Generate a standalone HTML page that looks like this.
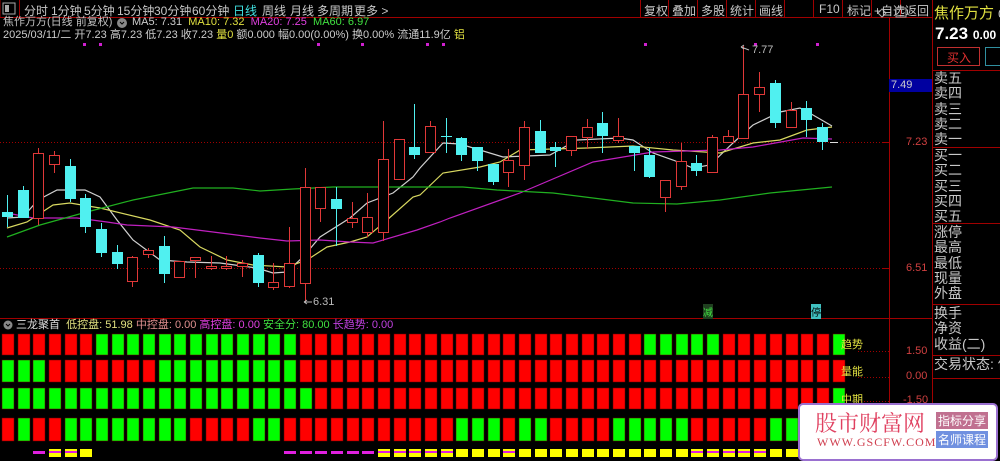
<!DOCTYPE html>
<html><head><meta charset="utf-8">
<style>
*{margin:0;padding:0;box-sizing:border-box}
body{width:1000px;height:459px;background:#000;overflow:hidden;position:relative;font-family:"Liberation Sans","Noto Sans CJK SC",sans-serif;color:#c0c0c0}
.a{position:absolute;white-space:nowrap}
.tb{font-size:12px;top:2px;color:#c8c8c8}
.rp{font-size:14px;color:#c8c8c8;left:934px;line-height:15.3px}
</style></head><body>
<svg class="a" style="left:0;top:0" width="1000" height="459" id="sv">
<line x1="0" y1="17.5" x2="932" y2="17.5" stroke="#a00000"/>
<line x1="0" y1="0" x2="0" y2="17" stroke="#a00000"/>
<rect x="3" y="3" width="12" height="11" fill="none" stroke="#aaa"/><rect x="5" y="5" width="4" height="7" fill="#aaa"/>
<line x1="19.5" y1="0" x2="19.5" y2="17" stroke="#a00000"/>
<line x1="640.5" y1="0" x2="640.5" y2="17" stroke="#a00000"/>
<g stroke="#a00000"><line x1="668.5" y1="0" x2="668.5" y2="17"/><line x1="697.5" y1="0" x2="697.5" y2="17"/><line x1="726.5" y1="0" x2="726.5" y2="17"/><line x1="755.5" y1="0" x2="755.5" y2="17"/><line x1="784.5" y1="0" x2="784.5" y2="17"/><line x1="813.5" y1="0" x2="813.5" y2="17"/><line x1="842.5" y1="0" x2="842.5" y2="17"/><line x1="871.5" y1="0" x2="871.5" y2="17"/><line x1="900.5" y1="0" x2="900.5" y2="17"/></g>
<line x1="932.5" y1="0" x2="932.5" y2="459" stroke="#a00000"/>
<line x1="889.5" y1="17" x2="889.5" y2="459" stroke="#a00000"/>
<line x1="0" y1="318.5" x2="932" y2="318.5" stroke="#a00000"/>
<line x1="932" y1="70.5" x2="1000" y2="70.5" stroke="#a00000"/>
<line x1="932" y1="147.5" x2="1000" y2="147.5" stroke="#a00000"/>
<line x1="932" y1="223.5" x2="1000" y2="223.5" stroke="#a00000"/>
<line x1="932" y1="304.5" x2="1000" y2="304.5" stroke="#a00000"/>
<line x1="932" y1="355.5" x2="1000" y2="355.5" stroke="#a00000"/>
<line x1="932" y1="378.5" x2="1000" y2="378.5" stroke="#a00000"/>
<rect x="937.5" y="47.5" width="42" height="18" fill="none" stroke="#c03030"/>
<rect x="985.5" y="47.5" width="20" height="18" fill="none" stroke="#3090a0"/>
<rect x="889" y="79" width="43" height="13" fill="#0000a0"/>
<line x1="0" y1="142.5" x2="889" y2="142.5" stroke="#a00000" stroke-dasharray="1,2"/>
<line x1="0" y1="268.5" x2="889" y2="268.5" stroke="#a00000" stroke-dasharray="1,2"/>
<g stroke="#a00000"><line x1="883" y1="142.5" x2="889" y2="142.5"/><line x1="883" y1="268.5" x2="889" y2="268.5"/></g>
<g stroke="#a00000" stroke-dasharray="1,2"><line x1="858" y1="351.5" x2="889" y2="351.5"/><line x1="858" y1="377.5" x2="889" y2="377.5"/><line x1="858" y1="401.5" x2="889" y2="401.5"/></g>
<path d="M878 13 l4 -4 4 4 -4 4z" fill="none" stroke="#aaa"/>
<rect x="896" y="8" width="10" height="9" fill="none" stroke="#aaa"/>
<g id="ma" fill="none" stroke-width="1.2">
<polyline stroke="#d0d0d0" points="7,218 23,217 38,200 57,190 85,190 100,197 117,220 133,240 160,260 187,262 220,263 257,268 273,273 287,272 303,257 320,237 350,218 367,203 393,193 413,177 420,168 443,143 460,144 503,157 550,155 577,140 620,138 633,140 653,153 673,160 693,168 710,165 733,143 753,125 780,112 800,108 813,115 832,126"/>
<polyline stroke="#d8d860" points="7,228 27,222 53,205 70,203 100,208 150,220 180,230 200,247 227,260 253,265 287,267 307,260 327,247 350,242 367,237 387,220 413,197 420,195 443,173 480,167 500,162 520,150 587,148 633,146 673,150 720,153 753,143 780,140 807,130 832,127"/>
<polyline stroke="#c020c0" points="7,213 33,218 77,218 107,222 127,225 173,227 213,232 260,238 287,241 320,240 350,242 373,243 417,230 440,222 450,218 520,193 593,162 653,152 720,150 753,147 803,138 832,139"/>
<polyline stroke="#20b020" points="7,237 40,225 83,213 133,200 193,188 233,188 260,191 293,189 333,187 463,187 497,190 553,193 633,203 677,204 720,200 770,193 832,187"/>
</g>
<g id="cd"></g>
<g id="bk"></g>
<g fill="#d020d0"><rect x="83" y="43" width="3" height="3"/><rect x="99" y="43" width="3" height="3"/><rect x="317" y="43" width="3" height="3"/><rect x="361" y="43" width="3" height="3"/><rect x="426" y="43" width="3" height="3"/><rect x="442" y="43" width="3" height="3"/><rect x="644" y="43" width="3" height="3"/><rect x="754" y="43" width="3" height="3"/><rect x="816" y="43" width="3" height="3"/></g>
<path d="M741 47 l8 3 M741 47 l3 -2 M741 47 l3 2" stroke="#bbb" fill="none"/>
<path d="M304 302 h8 M304 302 l3 -2 M304 302 l3 2" stroke="#bbb" fill="none"/>
<circle cx="8" cy="325" r="4.5" fill="#888"/><path d="M6 324 l2 2 2 -2" stroke="#000" fill="none"/>
<circle cx="122" cy="23" r="5" fill="#888"/><path d="M120 22 l2 2 2 -2" stroke="#000" fill="none"/>
</svg>
<div class="a tb" style="left:24px">分时</div>
<div class="a tb" style="left:51px">1分钟</div>
<div class="a tb" style="left:84px">5分钟</div>
<div class="a tb" style="left:117px">15分钟</div>
<div class="a tb" style="left:154px">30分钟</div>
<div class="a tb" style="left:192px">60分钟</div>
<div class="a tb" style="left:233px;color:#40e0e0">日线</div>
<div class="a tb" style="left:262px">周线</div>
<div class="a tb" style="left:290px">月线</div>
<div class="a tb" style="left:317px">多周期</div>
<div class="a tb" style="left:354px">更多 &gt;</div>
<div class="a tb" style="left:644px">复权</div>
<div class="a tb" style="left:672px">叠加</div>
<div class="a tb" style="left:701px">多股</div>
<div class="a tb" style="left:730px">统计</div>
<div class="a tb" style="left:759px">画线</div>
<div class="a tb" style="left:819px">F10</div>
<div class="a tb" style="left:847px">标记</div>
<div class="a tb" style="left:874px">+自选</div>
<div class="a tb" style="left:905px">返回</div>
<div class="a" style="left:3px;top:15px;font-size:11px;line-height:14px">焦作万方(日线 前复权)</div>
<div class="a" style="left:132px;top:15px;font-size:11px;line-height:14px"><span style="color:#ccc">MA5: 7.31</span>&nbsp; <span style="color:#e0e040">MA10: 7.32</span>&nbsp; <span style="color:#e040e0">MA20: 7.25</span>&nbsp; <span style="color:#40e040">MA60: 6.97</span></div>
<div class="a" style="left:3px;top:28px;font-size:11px;line-height:14px;color:#ccc">2025/03/11/二 开7.23 高7.23 低7.23 收7.23 <span style="color:#e0e040">量0</span> 额0.000 幅0.00(0.00%) 换0.00% 流通11.9亿 <span style="color:#e0e040">铝</span></div>
<div class="a" style="left:752px;top:44px;font-size:11px;color:#bbb">7.77</div>
<div class="a" style="left:313px;top:296px;font-size:11px;color:#bbb">6.31</div>
<div class="a" style="left:891px;top:79px;font-size:11px;color:#ccc">7.49</div>
<div class="a" style="left:906px;top:136px;font-size:11px;color:#d04040">7.23</div>
<div class="a" style="left:906px;top:262px;font-size:11px;color:#d04040">6.51</div>
<div class="a" style="left:906px;top:345px;font-size:11px;color:#d04040">1.50</div>
<div class="a" style="left:906px;top:370px;font-size:11px;color:#d04040">0.00</div>
<div class="a" style="left:903px;top:394px;font-size:11px;color:#d04040">-1.50</div>
<div class="a" style="left:703px;top:304px;font-size:10px;color:#40e040;background:#204020">减</div>
<div class="a" style="left:811px;top:304px;font-size:10px;color:#000;background:#40c0c0">停</div>
<div class="a" style="left:16px;top:318px;font-size:11px;line-height:14px"><span style="color:#ddd">三龙聚首</span>&nbsp; <span style="color:#e0e080">低控盘: 51.98</span>&nbsp;<span style="color:#e09090">中控盘: 0.00</span>&nbsp;<span style="color:#e040e0">高控盘: 0.00</span>&nbsp;<span style="color:#40e040">安全分: 80.00</span>&nbsp;<span style="color:#c040e0">长趋势: 0.00</span></div>
<div class="a" style="left:841px;top:336px;font-size:11px;color:#e0e040">趋势</div>
<div class="a" style="left:841px;top:363px;font-size:11px;color:#e0e040">量能</div>
<div class="a" style="left:841px;top:391px;font-size:11px;color:#e0e040">中期</div>
<div class="a" style="left:934px;top:2px;font-size:15px;color:#e0e040">焦作万方 <span style="color:#ccc;font-size:12px">00</span></div>
<div class="a" style="left:935px;top:24px;font-size:17px;color:#fff;font-weight:bold">7.23 <span style="font-size:12px">0.00</span></div>
<div class="a" style="left:947px;top:49px;font-size:12px;color:#e03030">买入</div>
<div class="a rp" style="top:71px">卖五<br>卖四<br>卖三<br>卖二<br>卖一</div>
<div class="a rp" style="top:148px">买一<br>买二<br>买三<br>买四<br>买五</div>
<div class="a rp" style="top:225px">涨停<br>最高<br>最低<br>现量<br>外盘</div>
<div class="a rp" style="top:306px">换手<br>净资<br>收益(二)</div>
<div class="a rp" style="top:357px">交易状态: 停</div>
<div class="a" style="left:798px;top:403px;width:200px;height:58px;background:#fff;border:2px solid #9a70d0;border-radius:5px"></div>
<div class="a" style="left:815px;top:407px;font-size:22px;color:#e04060;font-family:'Noto Serif CJK SC',serif">股市财富网</div>
<div class="a" style="left:817px;top:435px;font-size:12px;color:#d04050;font-family:'Liberation Serif',serif;letter-spacing:1px">WWW.GSCFW.COM</div>
<div class="a" style="left:936px;top:412px;font-size:12px;color:#fff;background:#c07090;padding:0 2px">指标分享</div>
<div class="a" style="left:936px;top:431px;font-size:12px;color:#fff;background:#7090e0;padding:0 2px">名师课程</div>
<script>
var C=[[0,195,212,217,227],[0,186,190,218,218],[1,148,153,218,225],[1,151,155,164,173],[0,159,166,199,202],[0,194,198,227,233],[0,223,229,253,257],[0,245,252,264,269],[1,256,257,281,287],[1,248,250,254,258],[0,236,246,274,283],[1,261,261,277,277],[1,257,257,260,278],[1,256,266,268,270],[1,256,266,268,270],[1,260,263,266,277],[0,253,255,283,287],[1,263,282,287,290],[1,227,263,286,288],[1,168,187,283,302],[1,187,187,208,222],[0,187,199,209,246],[1,202,218,222,228],[1,193,217,232,237],[1,121,159,232,241],[1,139,139,179,179],[0,104,147,155,159],[1,121,126,152,153],[0,118,136,137,153],[0,137,138,155,161],[0,147,147,161,171],[0,164,164,182,185],[1,149,160,172,187],[1,121,127,165,180],[0,120,131,153,153],[0,142,147,151,167],[1,136,136,150,156],[1,119,127,137,149],[0,112,123,136,153],[1,118,136,140,143],[0,146,146,153,171],[0,148,155,177,178],[1,180,180,197,212],[1,143,161,186,190],[0,155,163,171,176],[1,135,137,172,172],[1,130,136,142,143],[1,46,94,138,138],[1,72,87,94,112],[0,80,83,123,128],[1,102,110,127,127],[0,101,108,120,137],[0,123,127,142,150]];
var s='';C.forEach(function(c,i){var x=Math.round(7+15.67*i)+.5;var col=c[0]?'#e03838':'#50f0f0';
s+='<line x1="'+x+'" y1="'+c[1]+'" x2="'+x+'" y2="'+c[4]+'" stroke="'+col+'"/>';
var h=Math.max(1,c[3]-c[2]);
if(c[0])s+='<rect x="'+(x-5)+'" y="'+c[2]+'.5" width="10" height="'+h+'" fill="#000" stroke="'+col+'"/>';
else s+='<rect x="'+(x-5.5)+'" y="'+c[2]+'" width="11" height="'+h+'" fill="'+col+'"/>';});
s+='<line x1="830" y1="142.5" x2="838" y2="142.5" stroke="#ddd"/>';
document.getElementById('cd').innerHTML=s;
var R=['RRRRRRGGGGGGGGGGGGGRRRRRRRRRRRRRRRRRRRRRRGGGGGRRRRRRRG',
'GGGRRRRRRRGGGGGGGGGRRRRRRRRRRRRRRRRRRRRRRRRRRRRRRRRRRR',
'GGGGGGGGGGGGGGGGGGGGRRRRRRRRRRRRRRRRRRRRRRRRRRRRRRRRRG',
'RGRRGGGGGGGGRRRRGGRRRRRRRRRRRGGGRGGRRRRGGGGGRRRRRGGGGG'];
var Y=[[334,21],[360,22],[388,21],[418,23]];var b='';
R.forEach(function(r,k){for(var i=0;i<54;i++){var x=Math.round(2+15.67*i);b+='<rect x="'+x+'" y="'+Y[k][0]+'" width="12" height="'+Y[k][1]+'" fill="'+(r[i]=='R'?'#ff0000':'#00ff00')+'" stroke="#600" stroke-width=".5"/>';}});
var M='..mssy............mmmmmmsssssyyysyyyyyyyyyyysssssyyyy';
for(var i=0;i<M.length;i++){var x=Math.round(2+15.67*i),m=M[i];
if(m=='m')b+='<rect x="'+x+'" y="451" width="12" height="3" fill="#e020e0"/>';
if(m=='y'||m=='s')b+='<rect x="'+x+'" y="449" width="12" height="8" fill="#ffff00"/>';
if(m=='s')b+='<rect x="'+x+'" y="451" width="12" height="2" fill="#e020e0"/>';}
document.getElementById('bk').innerHTML=b;
</script>
</body></html>
